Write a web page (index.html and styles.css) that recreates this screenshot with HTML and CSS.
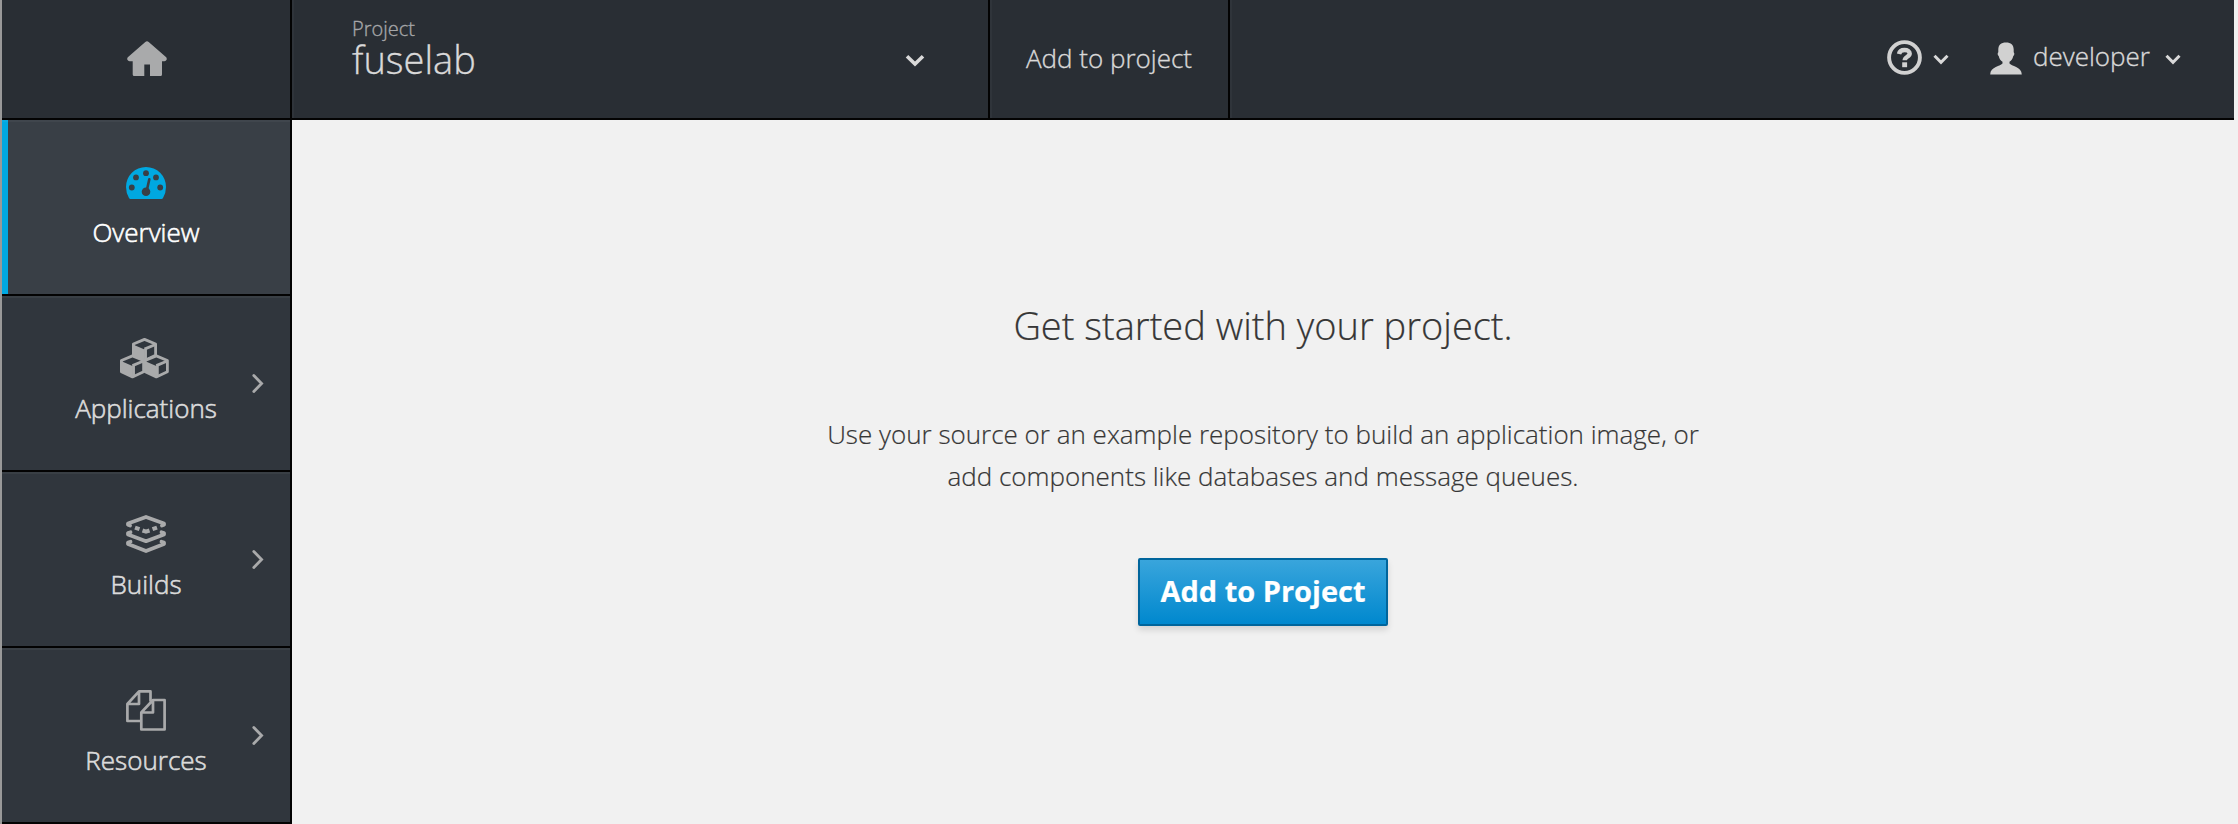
FILE: index.html
```html
<!DOCTYPE html>
<html lang="en">
<head>
<meta charset="utf-8">
<title>fuselab</title>
<link rel="stylesheet" href="styles.css">
</head>
<body>
<div class="app">
  <header class="topbar">
    <a class="home">
      <svg class="icon" width="40" height="36" viewBox="0 0 40 36"><path d="M18.3 1Q20 -.4 21.7 1L39.2 16.3Q40.3 18 39.2 19.3Q38.5 20.3 37.3 20.3H35V33.500Q35 35 33.500 35H23V23.500H17.300V35H7.200Q5.700 35 5.700 33.500V20.300H2.700Q1.500 20.300 .8 19.300Q-.4 18 .8 16.300Z"/></svg>
    </a>
    <div class="project">
      <div class="project-text">
        <span class="project-label">Project</span>
        <span class="project-name">fuselab</span>
      </div>
      <svg class="chev project-chev" width="20" height="13" viewBox="0 0 20 13"><path d="M2 2.200L10 10L18 2.200" stroke-width="3.600"/></svg>
    </div>
    <a class="add-link"><span class="add-text">Add to project</span></a>
    <div class="tools">
      <svg class="help" width="35" height="35" viewBox="0 0 35 35"><circle cx="17.500" cy="17.500" r="15.400" fill="none" stroke="#d1d1d1" stroke-width="3.900"/><path d="M12 14C12.600 10.900 15 10 17.500 10C20.700 10 22.700 11.500 22.700 13.500C22.700 17 17.700 16.500 17.700 20.300" fill="none" stroke="#d1d1d1" stroke-width="4.400"/><rect x="15.200" y="22.300" width="4.900" height="4.900" fill="#d1d1d1"/></svg>
      <svg class="chev help-chev" width="16" height="11" viewBox="0 0 16 11"><path d="M1.500 1.800L8 8.300L14.500 1.800" stroke-width="3"/></svg>
      <svg class="user" width="32" height="33" viewBox="0 0 32 33"><path d="M16 .5C21 .5 23.700 3 23.700 7.500V10.300C24.700 11 24.500 13.500 23.200 14.200C22.700 17 21.500 18.300 19.500 19.800V21.500C21 24 31.700 24.500 31.800 32.500H.2C.3 24.500 11 24 12.500 21.500V19.800C10.500 18.300 9.300 17 8.800 14.200C7.500 13.500 7.300 11 8.300 10.300V7.500C8.300 3 11 .5 16 .5Z" fill="#d1d1d1"/></svg>
      <span class="user-name">developer</span>
      <svg class="chev user-chev" width="16" height="11" viewBox="0 0 16 11"><path d="M1.500 1.800L8 8.300L14.500 1.800" stroke-width="3"/></svg>
    </div>
  </header>
  <div class="body">
    <nav class="sidebar">
      <a class="item active">
        <span class="glyph"><svg width="40" height="32" viewBox="0 0 40 32"><path fill="#00a8e1" d="M20 0A20 20 0 0 1 40 20Q40 26 37 31Q36.500 32 35.500 32H4.500Q3.500 32 3 31Q0 26 0 20A20 20 0 0 1 20 0Z"/><g fill="#393f46"><circle cx="20" cy="6.200" r="2.900"/><circle cx="10" cy="10.400" r="2.900"/><circle cx="30" cy="10.400" r="2.900"/><circle cx="5.800" cy="20.500" r="2.900"/><circle cx="34.200" cy="20.500" r="2.900"/><circle cx="20" cy="24.700" r="4.300"/></g><path d="M20.700 24L23.300 12.300" stroke="#393f46" stroke-width="2.600" stroke-linecap="round"/></svg></span>
        <span class="label">Overview</span>
      </a>
      <a class="item">
        <span class="glyph cubes"><svg width="49" height="41" viewBox="0 0 49 41"><defs><g id="cube"><path d="M1.400 6L12.500 1.400L23.600 6V17.300L12.500 22.400L1.400 17.300Z" fill="#30363d" stroke="#a9aaab" stroke-width="2.800" stroke-linejoin="round"/><path d="M1 6.500L12.500 11.500V23L1 17.500Z" fill="#a9aaab"/><path d="M12.500 11.200L23.500 6.500M13.500 11V22.500" fill="none" stroke="#a9aaab" stroke-width="2.900"/></g></defs><use href="#cube" x="12" y="0"/><use href="#cube" x="0" y="16.500"/><use href="#cube" x="23.800" y="16.500"/></svg></span>
        <span class="label">Applications</span>
        <svg class="arrow" width="12" height="19" viewBox="0 0 12 19"><path d="M1.800 1.500L9.600 9.500L1.800 17.500"/></svg>
      </a>
      <a class="item">
        <span class="glyph builds"><svg width="40" height="39" viewBox="0 0 40 39" fill="none" stroke="#a9aaab" stroke-width="3.800" stroke-linejoin="round" stroke-linecap="round"><path d="M4 10.500L2 9.800V8.500L20 2L38 8.500V9.800L36 10.500"/><path d="M9 12.600L13.500 14.200M26.500 14.200L31 12.600M16.500 15.500L20 16.700L23.500 15.500" stroke-linecap="butt" stroke-width="4"/><path d="M4.500 17.300L2 18V19.500L20 26.200L38 19.500V18L35.500 17.300M4.500 26.800L2 27.500V29L20 36L38 29V27.500L35.500 26.800"/></svg></span>
        <span class="label">Builds</span>
        <svg class="arrow" width="12" height="19" viewBox="0 0 12 19"><path d="M1.800 1.500L9.600 9.500L1.800 17.500"/></svg>
      </a>
      <a class="item">
        <span class="glyph files"><svg width="40" height="41" viewBox="0 0 40 41" fill="none" stroke="#a9aaab" stroke-width="2.700" stroke-linejoin="round"><path d="M14.500 31H1.400V14L13 1.400H24.500V11.500M1.800 14H13V1.800"/><path d="M15.300 22.500L27 10H38.600V39.500H15.300ZM15.500 22.500H27V10.500"/></svg></span>
        <span class="label">Resources</span>
        <svg class="arrow" width="12" height="19" viewBox="0 0 12 19"><path d="M1.800 1.500L9.600 9.500L1.800 17.500"/></svg>
      </a>
    </nav>
    <main class="main">
      <h1 class="title"><span class="title-text">Get started with your project.</span></h1>
      <p class="lead">Use your source or an example repository to build an application image, or<br>add components like databases and message queues.</p>
      <button class="btn"><span class="btn-text">Add to Project</span></button>
    </main>
  </div>
</div>
</body>
</html>
```
FILE: styles.css
```css
* { box-sizing: border-box; }
body { margin: 0; background: #f1f1f1; font-family: "Open Sans", sans-serif; }
.app { width: 2238px; height: 824px; border-left: 2px solid #999; border-right: 4px solid #f1f1f1; overflow: hidden; }
svg { display: block; flex: none; }
.topbar { display: flex; height: 120px; background: #292e34; border-bottom: 2px solid #030303; color: #d9d9d9; -webkit-text-stroke: .35px; }
.home { width: 290px; border-right: 2px solid #030303; padding: 41px 0 0 125px; }
.icon { fill: #a9aaab; }
.project { width: 698px; display: flex; align-items: flex-start; justify-content: space-between; border-left: 2px solid #2f343a; border-right: 2px solid #030303; padding: 15px 63px 0 58px; }
.project-text { display: flex; flex-direction: column; }
.project-label { font-size: 20px; line-height: 28px; font-weight: 300; color: #a5a6a8; }
.project-name { font-size: 38px; line-height: 40px; font-weight: 300; margin-top: -4px; }
.chev { fill: none; stroke: #d9d9d9; }
.project-chev { margin-top: 39px; }
.add-link { width: 240px; border-left: 2px solid #2f343a; border-right: 2px solid #030303; display: flex; justify-content: center; padding: 40px 2px 0 0; font-size: 26px; line-height: 36px; font-weight: 300; }
.tools { flex: 1; border-left: 2px solid #2f343a; display: flex; justify-content: flex-end; align-items: flex-start; padding-right: 53px; }
.help { margin-top: 40px; }
.help-chev { margin: 54px 0 0 11px; }
.user { margin: 42px 0 0 41px; }
.user-name { font-size: 26px; line-height: 36px; font-weight: 300; margin: 38px 0 0 11px; }
.user-chev { margin: 54px 0 0 15px; }
.body { display: flex; height: 704px; }
.sidebar { width: 290px; border-right: 2px solid #030303; background: #30363d; }
.item { position: relative; display: flex; flex-direction: column; align-items: center; height: 176px; border-top: 2px solid #393f45; border-bottom: 2px solid #030303; padding-top: 45px; color: #dbdbdb; }
.active { background: linear-gradient(90deg, #00a8e1 6px, #393f46 6px) border-box; border-top-color: rgba(255,255,255,.04); color: #fff; }
.glyph { height: 44px; }
.cubes { margin-left: -3px; margin-top: -5px; height: 49px; }
.builds { margin-top: -4px; height: 48px; }
.files { margin-top: -5px; height: 49px; }
.label { font-size: 26px; line-height: 42px; font-weight: 300; -webkit-text-stroke: .6px; }
.arrow { position: absolute; right: 26px; top: 76px; fill: none; stroke: #a9aaab; stroke-width: 2.800px; stroke-linecap: round; }
.main { flex: 1; display: flex; flex-direction: column; align-items: center; padding-top: 177px; color: #363636; -webkit-text-stroke: .2px; }
.title { margin: 0; font-size: 38px; line-height: 56px; font-weight: 300; }
.lead { margin: 60px 0 0; font-size: 26px; line-height: 42px; font-weight: 300; text-align: center; }
.btn { margin: 61px 0 0; width: 250px; height: 68px; border: 2px solid #00659c; border-radius: 2px; background: linear-gradient(#39a5dc, #0088ce); box-shadow: 0 4px 6px rgba(3,3,3,.12); color: #fff; font: 700 29px/60px "Open Sans", sans-serif; padding: 0 0 3px; white-space: nowrap; }
```
